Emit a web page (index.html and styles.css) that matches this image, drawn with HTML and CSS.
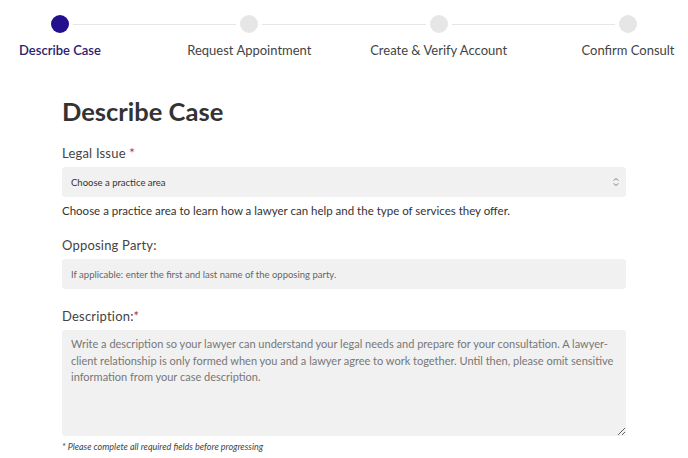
FILE: index.html
```html
<!DOCTYPE html>
<html lang="en">
<head>
<meta charset="utf-8">
<title>Describe Case</title>
<link rel="stylesheet" href="styles.css">
</head>
<body>
<nav class="stepper">
  <div class="step active"><span class="dot"></span><span class="step-label">Describe Case</span></div>
  <div class="step"><span class="dot"></span><span class="step-label">Request Appointment</span></div>
  <div class="step"><span class="dot"></span><span class="step-label">Create &amp; Verify Account</span></div>
  <div class="step"><span class="dot"></span><span class="step-label">Confirm Consult</span></div>
</nav>
<main class="form">
  <h1 class="title">Describe Case</h1>
  <label class="label" for="issue">Legal Issue <span class="req">*</span></label>
  <div class="select-wrap">
    <select id="issue" class="control select">
      <option>Choose a practice area</option>
    </select>
    <svg class="chev" width="8" height="10" viewBox="0 0 8 10"><path d="M1.5 3.5 L4 1.5 L6.5 3.5 M1.5 6.5 L4 8.5 L6.5 6.5" fill="none" stroke="#8a8a8a" stroke-width="1"/></svg>
  </div>
  <p class="help">Choose a practice area to learn how a lawyer can help and the type of services they offer.</p>
  <label class="label" for="party">Opposing Party:</label>
  <input id="party" class="control input" type="text" placeholder="If applicable: enter the first and last name of the opposing party.">
  <label class="label" for="desc">Description:<span class="req">*</span></label>
  <textarea id="desc" class="control textarea" placeholder="Write a description so your lawyer can understand your legal needs and prepare for your consultation. A lawyer-client relationship is only formed when you and a lawyer agree to work together. Until then, please omit sensitive information from your case description."></textarea>
  <p class="note">* Please complete all required fields before progressing</p>
</main>
</body>
</html>
```
FILE: styles.css
```css
* { box-sizing: border-box; }
html, body { margin: 0; padding: 0; background: #fff; }
body { font-family: Lato, "Open Sans", sans-serif; color: #333; }

.stepper {
  position: relative;
  display: flex;
  justify-content: space-between;
  padding-top: 15px;
}
.stepper::before {
  content: "";
  position: absolute;
  top: 24px;
  left: 60px;
  right: 60px;
  height: 1px;
  background: #e6e6e6;
}
.step {
  width: 120px;
  display: flex;
  flex-direction: column;
  align-items: center;
}
.dot {
  position: relative;
  z-index: 1;
  width: 18px;
  height: 18px;
  border-radius: 50%;
  background: #e6e6e6;
  box-shadow: 0 0 0 4px #fff;
}
.step.active .dot { background: #22108c; }
.step-label {
  margin-top: 9px;
  font-size: 13px;
  color: #444;
  white-space: nowrap;
}
.step.active .step-label { color: #2b2170; font-weight: 600; }

.form {
  width: 564px;
  margin: 0 auto;
  display: flex;
  flex-direction: column;
}
.title {
  margin: 38px 0 18px;
  font-size: 25.5px;
  font-weight: 700;
  color: #333;
  line-height: 31px;
}
.label {
  font-size: 13px;
  color: #444;
  line-height: 16px;
  margin-bottom: 6px;
  letter-spacing: 0.2px;
}
.req { color: #b3322b; }
.control {
  display: block;
  width: 100%;
  border: none;
  border-radius: 3px;
  background: #f1f1f1;
  font-family: Lato, "Open Sans", sans-serif;
  color: #333;
  outline: none;
}
.select-wrap { position: relative; }
.select {
  height: 30px;
  padding: 0 9px;
  font-size: 9.5px;
  -webkit-appearance: none;
  appearance: none;
}
.chev {
  position: absolute;
  right: 6px;
  top: 10px;
}
.help {
  margin: 6px 0 18px;
  font-size: 11.5px;
  line-height: 16px;
  color: #333;
}
.input {
  height: 30px;
  padding: 0 9px;
  font-size: 9.5px;
  margin-bottom: 19px;
}
.input::placeholder { color: #666; }
.textarea {
  height: 106px;
  padding: 6px 9px;
  font-size: 11px;
  line-height: 16.5px;
  resize: vertical;
}
.textarea::placeholder { color: #777; }
.note {
  margin: 5px 0 0;
  font-size: 9px;
  font-style: italic;
  color: #444;
}
```
